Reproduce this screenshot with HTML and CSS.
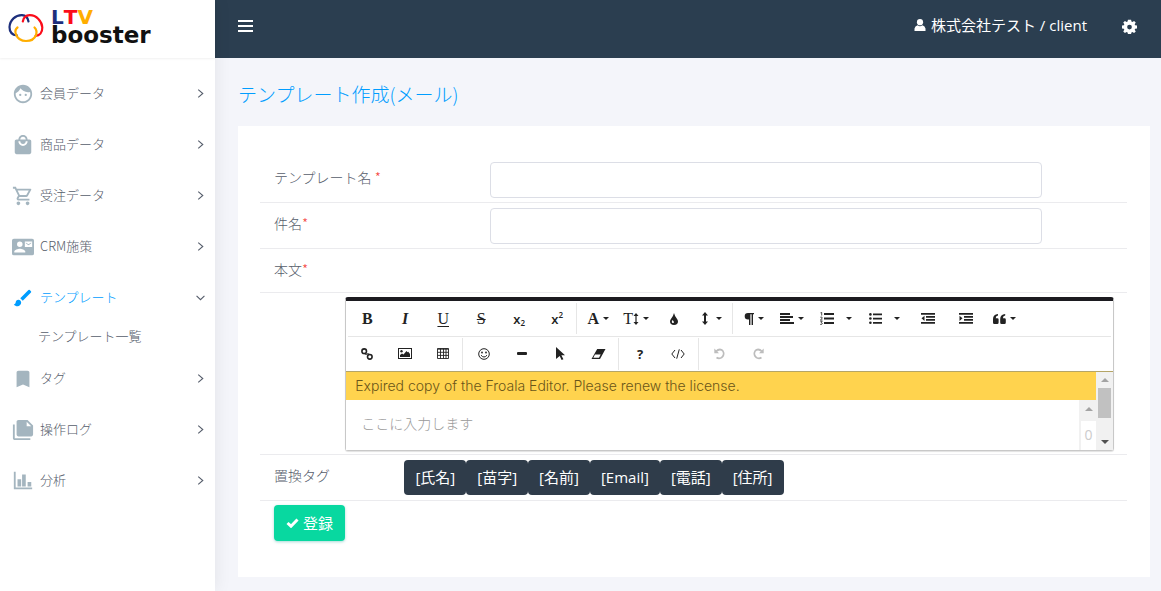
FILE: index.html
```html
<!DOCTYPE html>
<html lang="ja">
<head>
<meta charset="utf-8">
<title>テンプレート作成(メール)</title>
<link rel="stylesheet" href="styles.css">
</head>
<body>
<div class="app">
  <aside class="sidebar">
    <a class="brand" href="#">
      <svg class="brand-mark" viewBox="0 0 36 30" width="36" height="30" fill="none" stroke-width="2.2" stroke-linecap="round">
        <path d="M9 22.500C4 22 1.500 18.500 1.500 14C2 7 7.500 2 14 2.200C18.500 2.500 20 5.500 20.500 8.500" stroke="#1d2f7c"/>
        <path d="M14.800 8.500C15.500 5 17.500 2.300 21.500 2.200C28.500 2 34 8.500 34.300 14.500C34.500 19.500 31.500 22.500 27.500 23" stroke="#fb0d1b"/>
        <path d="M9.500 14.500C7.500 16 7 19 8 21.500C10 26.500 14 28 18 28C22.500 28 26.500 26 28 22C29 19 28.500 16.500 26.500 14.500" stroke="#ffae00"/>
      </svg>
      <span class="brand-text"><span class="ltv"><i class="c-l">L</i><i class="c-t">T</i><i class="c-v">V</i></span><span class="booster">booster</span></span>
    </a>
    <nav class="menu">
      <a class="item" href="#"><svg class="ico" viewBox="0 0 24 24"><path d="M9 11.750a1.250 1.250 0 100 2.500 1.250 1.250 0 000-2.500zm6 0a1.250 1.250 0 100 2.500 1.250 1.250 0 000-2.500zM12 2C6.480 2 2 6.480 2 12s4.480 10 10 10 10-4.480 10-10S17.520 2 12 2zm0 18c-4.410 0-8-3.590-8-8 0-.29.02-.58.05-.86 2.360-1.050 4.230-2.980 5.210-5.370C11.070 8.330 14.050 10 17.420 10c.78 0 1.530-.09 2.250-.26.21.71.33 1.470.33 2.260 0 4.410-3.590 8-8 8z"/></svg><span>会員データ</span><svg class="arrow" viewBox="0 0 8 8"><path d="M2 0.500L6 4L2 7.500"/></svg></a>
      <a class="item" href="#"><svg class="ico" viewBox="0 0 24 24"><path d="M19 6h-2c0-2.760-2.240-5-5-5S7 3.240 7 6H5c-1.100 0-2 .9-2 2v12c0 1.100.9 2 2 2h14c1.100 0 2-.9 2-2V8c0-1.100-.9-2-2-2zm-7-3c1.660 0 3 1.340 3 3H9c0-1.660 1.340-3 3-3zm0 10c-2.760 0-5-2.240-5-5h2c0 1.660 1.340 3 3 3s3-1.340 3-3h2c0 2.760-2.240 5-5 5z"/></svg><span>商品データ</span><svg class="arrow" viewBox="0 0 8 8"><path d="M2 0.500L6 4L2 7.500"/></svg></a>
      <a class="item" href="#"><svg class="ico" viewBox="0 0 24 24"><path d="M15.550 13c.75 0 1.410-.41 1.750-1.030l3.580-6.490A.996.996 0 0020.010 4H5.210l-.94-2H1v2h2l3.600 7.590-1.350 2.440C4.520 15.370 5.480 17 7 17h12v-2H7l1.100-2h7.450zM6.160 6h12.150l-2.760 5H8.530L6.160 6zM7 18c-1.100 0-1.990.9-1.990 2S5.900 22 7 22s2-.9 2-2-.9-2-2-2zm10 0c-1.100 0-1.990.9-1.990 2s.89 2 1.990 2 2-.9 2-2-.9-2-2-2z"/></svg><span>受注データ</span><svg class="arrow" viewBox="0 0 8 8"><path d="M2 0.500L6 4L2 7.500"/></svg></a>
      <a class="item" href="#"><svg class="ico" viewBox="0 0 24 24"><path d="M22 3H2a2 2 0 00-2 2v14a2 2 0 002 2h20a2 2 0 002-2V5a2 2 0 00-2-2zM8.500 6a3 3 0 110 6 3 3 0 010-6zM14.500 18h-12v-1c0-2 4-3.100 6-3.100s6 1.100 6 3.100v1zM22 12h-8V6h8v6zm-1-5l-3 2-3-2v1l3 2 3-2V7z"/></svg><span>CRM施策</span><svg class="arrow" viewBox="0 0 8 8"><path d="M2 0.500L6 4L2 7.500"/></svg></a>
      <a class="item active" href="#"><svg class="ico" viewBox="0 0 24 24"><path d="M7 14c-1.660 0-3 1.340-3 3 0 1.310-1.160 2-2 2 .92 1.220 2.490 2 4 2 2.210 0 4-1.790 4-4 0-1.660-1.340-3-3-3zm13.710-9.370l-1.340-1.340a.996.996 0 00-1.410 0L9 12.250 11.750 15l8.960-8.960c.39-.39.39-1.020 0-1.410z"/></svg><span>テンプレート</span><svg class="arrow" viewBox="0 0 8 8"><path d="M0.500 2.500L4 6L7.500 2.500"/></svg></a>
      <a class="subitem" href="#">テンプレート一覧</a>
      <a class="item" href="#"><svg class="ico" viewBox="0 0 24 24"><path d="M17 3H7c-1.100 0-2 .9-2 2v16l7-3 7 3V5c0-1.100-.9-2-2-2z"/></svg><span>タグ</span><svg class="arrow" viewBox="0 0 8 8"><path d="M2 0.500L6 4L2 7.500"/></svg></a>
      <a class="item" href="#"><svg class="ico" viewBox="0 0 24 24"><path fill-rule="evenodd" d="M1 6v15c0 1.100.9 2 2 2h17v-2H3V6H1zm6-5h10l6 6v10c0 1.100-.9 2-2 2H7c-1.100 0-2-.9-2-2V3c0-1.100.9-2 2-2zm9 2v5h5l-5-5z"/></svg><span>操作ログ</span><svg class="arrow" viewBox="0 0 8 8"><path d="M2 0.500L6 4L2 7.500"/></svg></a>
      <a class="item" href="#"><svg class="ico" viewBox="0 0 24 24"><path d="M2 2h2v17h18v2H2zM6 10h4v8H6zM11 5h4v13h-4zM17 13h4v5h-4z"/></svg><span>分析</span><svg class="arrow" viewBox="0 0 8 8"><path d="M2 0.500L6 4L2 7.500"/></svg></a>
    </nav>
  </aside>

  <div class="page">
    <header class="topbar">
      <button class="plain" type="button" aria-label="メニュー"><svg viewBox="0 0 15 12" width="15" height="12" fill="#fff"><path d="M0 0h15v2H0zM0 5h15v2H0zM0 10h15v2H0z"/></svg></button>
      <div class="user"><svg viewBox="0 0 12 12" width="12" height="12" fill="#fff"><circle cx="6" cy="3.200" r="3.100"/><path d="M0.500 12V9.500Q1 7 3.500 6.300Q6 8 8.500 6.300Q11 7 11.500 9.500V12z"/></svg><span>株式会社テスト / client</span></div>
      <button class="plain" type="button" aria-label="設定"><svg viewBox="0 0 24 24" width="15" height="15" fill="#fff"><path fill-rule="evenodd" d="M9.500 2h5l.6 3 1.500.7 2.700-1.700 2.700 2.700-1.700 2.700.7 1.600 3 .5v4.500l-3 .5-.7 1.600 1.700 2.700-2.700 2.700-2.700-1.700-1.500.7-.6 2.500h-5l-.6-2.500-1.500-.7-2.700 1.700L2 20.800l1.700-2.700L3 16.500 0 16v-4.500l3-.5.700-1.600L2 6.700 4.700 4l2.700 1.700L8.900 5zM12 10a3.800 3.800 0 100 7.600 3.800 3.800 0 000-7.600z" transform="translate(0 -1)"/></svg></button>
    </header>

    <main class="content">
      <h1>テンプレート作成(メール)</h1>
      <form class="card">
        <div class="row"><label class="col-label" for="name">テンプレート名 <span class="req">*</span></label><div class="col-field"><input id="name" type="text"></div></div>
        <div class="row"><label class="col-label" for="subject">件名<span class="req">*</span></label><div class="col-field"><input id="subject" type="text"></div></div>
        <div class="row short"><span class="col-label">本文<span class="req">*</span></span></div>
        <div class="row editor-row">
          <div class="editor">
            <div class="toolbar">
              <div class="tools">
                <div class="group">
                  <button type="button" class="serif bold">B</button>
                  <button type="button" class="serif bold ital">I</button>
                  <button type="button" class="serif under">U</button>
                  <button type="button" class="serif strike">S</button>
                  <button type="button" class="script">x<sub>2</sub></button>
                  <button type="button" class="script">x<sup>2</sup></button>
                </div>
                <div class="group">
                  <button type="button" class="serif bold">A<i class="caret"></i></button>
                  <button type="button" class="serif">T<svg viewBox="0 0 6 12" width="6" height="12"><path d="M3 0L5.500 3H3.600V9H5.500L3 12L.5 9H2.400V3H.5z"/></svg><i class="caret"></i></button>
                  <button type="button" aria-label="色"><svg viewBox="0 0 8 12" width="8" height="12"><path fill-rule="evenodd" d="M4 0Q4.600 2.600 6.600 5.200Q8 7 8 8.200A4 3.800 0 010 8.200Q0 7 1.400 5.200Q3.400 2.600 4 0zM2.600 7Q1.400 8.400 2 9.500Q3 10.500 3.900 9.500Q4.200 8.500 2.600 7z"/></svg></button>
                  <button type="button" class="wide-caret" aria-label="行の高さ"><svg viewBox="0 0 6 13" width="6" height="13"><path d="M3 0L6 3.500H4V9.500H6L3 13L0 9.500H2V3.500H0z"/></svg><i class="caret"></i></button>
                </div>
                <div class="group">
                  <button type="button" aria-label="段落"><svg viewBox="0 0 10 12" width="10" height="12"><path d="M4 0H10V1.300H9V12H7.600V1.300H6.400V12H5V6.500H4A3.300 3.250 0 014 0z"/></svg><i class="caret"></i></button>
                  <button type="button" aria-label="配置"><svg viewBox="0 0 14 11" width="14" height="11"><path d="M0 0h10v2H0zM0 3h13v2H0zM0 6h10v2H0zM0 9h14v2H0z"/></svg><i class="caret"></i></button>
                  <button type="button" class="list" aria-label="番号付きリスト"><svg viewBox="0 0 14 13" width="14" height="13"><path d="M4 1h10v2H4zM4 5.500h10v2H4zM4 10h10v2H4z"/><path d="M.5 .8L1.700 .3V3.500M.3 5.200Q2.500 4.600 2.200 6Q2 6.800.4 8H2.500M.3 9.300H2.200L1.200 10.600Q2.600 10.800 2.200 11.900Q1.500 12.900.2 12.300" fill="none" stroke="#222" stroke-width=".8"/></svg><i class="caret"></i></button>
                  <button type="button" class="list" aria-label="箇条書きリスト"><svg viewBox="0 0 13 11" width="13" height="11"><path d="M4 .5h9v1.700H4zM4 4.700h9v1.700H4zM4 9h9v1.700H4z"/><circle cx="1.400" cy="1.400" r="1.300"/><circle cx="1.400" cy="5.500" r="1.300"/><circle cx="1.400" cy="9.700" r="1.300"/></svg><i class="caret"></i></button>
                  <button type="button" aria-label="インデント解除"><svg viewBox="0 0 14 11" width="14" height="11"><path d="M0 0h14v1.700H0zM5 3h9v1.700H5zM5 6h9v1.700H5zM0 9h14v1.700H0zM3.500 2.700V8L.5 5.300z"/></svg></button>
                  <button type="button" aria-label="インデント"><svg viewBox="0 0 14 11" width="14" height="11"><path d="M0 0h14v1.700H0zM5 3h9v1.700H5zM5 6h9v1.700H5zM0 9h14v1.700H0zM.5 2.700V8L3.500 5.300z"/></svg></button>
                  <button type="button" aria-label="引用"><svg viewBox="0 0 13 10" width="13" height="10"><path d="M5 0V1.600Q2.800 1.800 2.700 4.300H4.300Q5.600 4.300 5.600 5.500V8.500Q5.600 10 4.300 10H1.300Q0 10 0 8.500V5Q0 .3 5 0z"/><path d="M12.200 0V1.600Q10 1.800 9.900 4.300H11.500Q12.800 4.300 12.800 5.500V8.500Q12.800 10 11.500 10H8.500Q7.200 10 7.200 8.500V5Q7.200 .3 12.200 0z"/></svg><i class="caret"></i></button>
                </div>
              </div>
              <div class="tools second">
                <div class="group">
                  <button type="button" aria-label="リンク"><svg class="line" viewBox="0 0 12 12" width="12" height="12" stroke-width="1.600"><circle cx="3.200" cy="3.200" r="2.300"/><circle cx="8.800" cy="8.800" r="2.300"/><path d="M3.500 5.200Q4.500 6.600 6 6Q7.500 5.400 8.500 6.800" stroke-width="1.200"/></svg></button>
                  <button type="button" aria-label="画像"><svg viewBox="0 0 14 11" width="14" height="11"><path fill-rule="evenodd" d="M0 0H14V11H0zM1 1V10H13V1z"/><circle cx="3.500" cy="3.300" r="1.200"/><path d="M2 9V7L4 5.500L5.500 6.500L8.500 3L9.500 4.300L10.300 3.800L12 6V9z"/></svg></button>
                  <button type="button" aria-label="表"><svg class="line" viewBox="0 0 12 11" width="12" height="11" stroke-width=".9"><path d="M.5 .5H11.500V10.500H.5zM3.500 .5V10.500M6.500 .5V10.500M9 .5V10.500M.5 4.300H11.500M.5 7.400H11.500M.5 1.200H11.500"/></svg></button>
                </div>
                <div class="group">
                  <button type="button" aria-label="絵文字"><svg viewBox="0 0 12 12" width="12" height="12"><circle cx="6" cy="6" r="5.300" fill="none" stroke="#222"/><circle cx="4" cy="4.500" r=".9"/><circle cx="8" cy="4.500" r=".9"/><path d="M3 7.200Q6 10.800 9 7.200" fill="none" stroke="#222"/></svg></button>
                  <button type="button" aria-label="水平線"><svg viewBox="0 0 10 3" width="10" height="3"><rect width="10" height="3" rx="1"/></svg></button>
                  <button type="button" aria-label="全て選択"><svg viewBox="0 0 9 13" width="9" height="13"><path d="M0 0L9 8.300H5.400L7.400 12.300L5.600 13L3.700 8.900L0 12z"/></svg></button>
                  <button type="button" aria-label="書式クリア"><svg viewBox="0 0 15 10" width="15" height="10"><path fill-rule="evenodd" d="M6.200 0H14.500L9 10H.5zM4 5.500L2.300 8.700H8L9.700 5.500z"/></svg></button>
                </div>
                <div class="group">
                  <button type="button" class="help">?</button>
                  <button type="button" aria-label="コード"><svg class="line" viewBox="0 0 14 10" width="14" height="10"><path d="M4 1L.8 5L4 9M10 1L13.200 5L10 9M8.300 .3L5.700 9.700"/></svg></button>
                </div>
                <div class="group">
                  <button type="button" aria-label="元に戻す" disabled><svg viewBox="0 0 12 12" width="12" height="12"><path d="M2 3.500Q4.500 .8 7.500 1.800A4.500 4.500 0 11 2.500 9.500" fill="none" stroke="#bdbdbd" stroke-width="1.800"/><path d="M.3 .5V5.200H5z" fill="#bdbdbd"/></svg></button>
                  <button type="button" aria-label="やり直し" disabled><svg viewBox="0 0 12 12" width="12" height="12"><path d="M10 3.500Q7.500 .8 4.500 1.800A4.500 4.500 0 109.500 9.500" fill="none" stroke="#bdbdbd" stroke-width="1.800"/><path d="M11.700 .5V5.200H7z" fill="#bdbdbd"/></svg></button>
                </div>
              </div>
            </div>
            <div class="wrapper">
              <div class="pane">
                <div class="notice">Expired copy of the Froala Editor. Please renew the license.</div>
                <div class="edit-area">
                  <textarea aria-label="本文" placeholder="ここに入力します"></textarea>
                  <div class="bar inner"><i class="up"></i><span class="counter">0</span></div>
                </div>
              </div>
              <div class="bar"><i class="up"></i><i class="thumb"></i><i class="down"></i></div>
            </div>
          </div>
        </div>
        <div class="row"><span class="col-tag">置換タグ</span><div class="tags"><button type="button">[氏名]</button><button type="button">[苗字]</button><button type="button">[名前]</button><button type="button">[Email]</button><button type="button">[電話]</button><button type="button">[住所]</button></div></div>
        <div class="actions"><button class="submit" type="button"><svg viewBox="0 0 13 10" width="13" height="10"><path d="M1.500 5L5 8.200L11.500 1.500" fill="none" stroke="#fff" stroke-width="3"/></svg>登録</button></div>
      </form>
    </main>
  </div>
</div>
</body>
</html>
```

FILE: styles.css
```css
* { box-sizing: border-box; }
body {
  margin: 0;
  background: #f4f5fa;
  color: #565d6b;
  font: 300 14px/20px "Noto Sans CJK JP", "Open Sans", sans-serif;
}
a { color: inherit; text-decoration: none; }
button, input, textarea { font: inherit; color: inherit; }
i { font-style: normal; }
svg { flex: none; }

.app { display: flex; min-height: 100vh; }

/* Sidebar */
.sidebar {
  flex: none;
  width: 215px;
  background: #fff;
  box-shadow: 1px 0 16px rgba(0, 0, 0, .07);
  position: relative;
  z-index: 1;
}
.brand {
  display: flex;
  gap: 7px;
  height: 58px;
  padding: 9px 8px 0;
  box-shadow: 0 1px 2px rgba(0, 0, 0, .06);
}
.brand-mark { margin-top: 4px; }
.brand-text {
  display: flex;
  flex-direction: column;
  font: bold 23px/19px "DejaVu Sans", sans-serif;
  color: #111;
}
.ltv { display: flex; font-size: 20px; line-height: 17px; }
.c-l { color: #1d2f7c; }
.c-t { color: #fb0d1b; }
.c-v { color: #ffae00; }

.menu { padding-top: 9px; font-size: 13px; }
.item {
  display: flex;
  align-items: center;
  height: 51px;
  padding: 0 10px 0 12px;
  gap: 6px;
}
.item span { flex: 1; }
.ico { width: 22px; height: 22px; fill: #a4b5bf; margin-top: 3px; }
.arrow { width: 9px; height: 9px; margin-top: 1px; fill: none; stroke: #565d6b; }
.active { color: #009dff; }
.active .ico { fill: #009dff; }
.subitem { display: block; height: 30px; padding: 4px 0 0 38px; }

/* Top bar */
.page { flex: 1; min-width: 0; }
.topbar {
  display: flex;
  align-items: center;
  height: 58px;
  padding: 0 24px 0 23px;
  background: #2b3e50;
  color: #fff;
}
.plain { display: flex; padding: 0; border: 0; background: none; margin-top: -6px; }
.user {
  display: flex;
  align-items: center;
  gap: 5px;
  margin: -8px 35px 0 auto;
  font: 400 15px/20px "Open Sans", "Noto Sans CJK JP", sans-serif;
}

/* Content */
.content { padding: 22px 11px 14px 23px; }
h1 { margin: 0 0 18px; font-size: 19px; line-height: 28px; font-weight: 300; color: #009dff; }
.card { background: #fff; padding: 31px 23px 36px 22px; }
.row { display: flex; min-height: 46px; padding: 5px 0 4px; border-bottom: 1px solid #ebebee; }
.short { min-height: 44px; }
.col-label { flex: none; width: 25%; padding: 5px 14px; }
.col-field { flex: none; width: 66.66%; padding: 0 13px; }
.col-field input {
  display: block;
  width: 100%;
  height: 36px;
  padding: 0 12px;
  border: 1px solid #dcdee6;
  border-radius: 4px;
  background: #fff;
}
.req { color: #f4433c; }
.editor-row { padding: 4px 13px 3px calc(8.33% + 13px); }

/* Editor */
.editor {
  flex: 1;
  min-width: 0;
  border: 1px solid #c8c8c8;
  border-top: 4px solid #1c1b20;
  border-radius: 3px;
  box-shadow: 0 1px 1px rgba(0, 0, 0, .12);
  color: #222;
}
.toolbar { border-bottom: 1px solid #b5a566; }
.tools { display: flex; height: 35px; margin: 0 2px; padding: 2px 0; }
.second { border-top: 1px solid #e6e6e6; padding: 1px 0; }
.group { display: flex; padding: 0 1px 0 2px; border-left: 1px solid #e6e6e6; }
.group:first-child { padding: 0; border: 0; }
.group button {
  display: flex;
  align-items: center;
  justify-content: center;
  width: 38px;
  height: 31px;
  padding: 0;
  border: 0;
  background: none;
  color: #222;
}
.group svg { fill: #222; }
.group .line { fill: none; stroke: #222; }
.group .serif { font-family: "Liberation Serif", serif; font-size: 16px; font-weight: 400; }
.group .bold { font-weight: 700; }
.ital { font-style: italic; }
.under { text-decoration: underline; text-underline-offset: 2px; }
.strike { text-decoration: line-through; }
.group .script, .group .help { font: 700 13px/18px "Open Sans", sans-serif; }
.group .script { font-weight: 600; }
.script sub, .script sup { font-size: 8px; line-height: 8px; }
.script sub { align-self: flex-end; padding-bottom: 7px; }
.script sup { align-self: flex-start; padding-top: 8px; }
.caret {
  margin-left: 4px;
  border: 3px solid transparent;
  border-top-color: #222;
  border-bottom: 0;
}
.group .list { width: 49px; }
.list .caret { margin-left: 12px; }
.wide-caret .caret { margin-left: 8px; }

.wrapper { display: flex; height: 78px; }
.pane { flex: 1; min-width: 0; display: flex; flex-direction: column; }
.notice {
  height: 28px;
  padding: 0 9px;
  background: #ffd34e;
  color: #6a5519;
  font: 300 14px/27px Inter, sans-serif;
}
.edit-area { flex: 1; display: flex; }
.edit-area textarea {
  flex: 1;
  min-width: 0;
  padding: 13px 15px;
  border: 0;
  resize: none;
  height: 50px;
  overflow: hidden;
}
textarea::placeholder { color: #999; opacity: 1; }
.bar {
  flex: none;
  display: flex;
  flex-direction: column;
  align-items: center;
  width: 17px;
  padding: 6px 0;
  background: #f1f1f1;
}
.up { border: 4px solid transparent; border-bottom-color: #a3a3a3; border-top: 0; }
.down { border: 4px solid transparent; border-top-color: #505050; border-bottom: 0; margin-top: auto; }
.thumb { width: 13px; height: 30px; margin-top: 6px; background: #c1c1c1; }
.inner { padding: 7px 0 0 2px; }
.counter {
  flex: 1;
  width: 100%;
  margin-top: 10px;
  background: #fff;
  color: #ccc;
  text-align: center;
  font: 400 14px/28px "Open Sans", sans-serif;
}

/* Tags and submit */
.col-tag { flex: none; width: 16.66%; padding: 5px 14px; }
.tags { display: flex; }
.tags button, .submit {
  border: 0;
  border-radius: 4px;
  color: #fff;
  font: 400 15px/20px "Open Sans", "Noto Sans CJK JP", sans-serif;
}
.tags button { height: 35px; padding: 0 11px 2px; background: #2f3c4a; }
.actions { padding: 4px 14px 0; }
.submit {
  display: flex;
  align-items: center;
  gap: 4px;
  height: 36px;
  padding: 0 12px;
  background: #08d8a0;
  box-shadow: 0 1px 3px rgba(0, 150, 140, .35);
}
```
